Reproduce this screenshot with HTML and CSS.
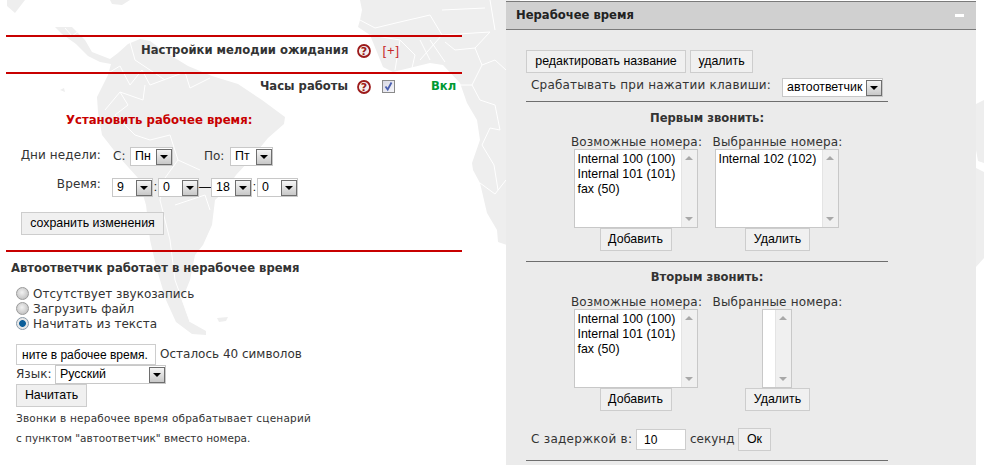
FILE: index.html
```html
<!DOCTYPE html>
<html lang="ru">
<head>
<meta charset="utf-8">
<title>Нерабочее время</title>
<link rel="stylesheet" href="styles.css">
</head>
<body>
<svg class="map" width="984" height="465" viewBox="0 0 984 465" aria-hidden="true">
  <g class="land">
    <path d="M7 0L25 0L15 13L7 6Z"/>
    <path d="M110 0L130 0L122 5L112 4Z"/>
    <path d="M55 27L72 27L85 40L92 52L110 59L118 53L128 44L140 39L150 41L165 52L188 66L212 76L238 84L262 100L285 117L284 124L268 138L250 160L236 175L226 190L215 200L212 225L203 245L195 255L190 280L182 300L190 322L206 331L206 335L192 334L176 322L166 300L157 270L150 240L146 205L138 178L120 158L102 135L98 112L97 97L108 75L111 64L100 62L88 56L76 44L62 34Z"/>
    <path d="M217 318L228 317L226 321L219 322Z"/>
    <path d="M60 90L64 88L65 92Z"/>
    <path d="M360 0L520 0L520 250L507 245L498 242L497 230L487 213L480 183L473 170L472 163L480 140L477 120L467 103L460 83L443 65L430 63L393 72L383 67L370 35L358 27L360 20L362 10Z"/>
    <path d="M976 104L984 100L984 163L978 161L976 150Z"/>
    <path d="M976 168L984 172L984 258L976 267Z"/>
  </g>
  <g class="borders">
    <path d="M65 28L72 36L80 30M98 62L110 72L120 66L130 85L142 70L150 85L185 72L190 88L210 78M130 42L135 60L165 80M145 85L143 100L120 92L105 110M120 92L128 105L115 115L135 135L150 140L170 135L178 160L200 170M178 160L165 178L160 200L170 240L175 280L190 322M175 205L205 195L210 210"/>
    <path d="M360 20L375 28L400 22L430 15L442 35L420 60M442 35L490 32M442 10L485 8M370 35L400 40L395 70M400 40L415 55L412 68M420 40L430 60M430 40L445 62M445 42L455 50L475 48L482 65L472 85L480 100L495 105L500 130M472 85L460 85M475 48L490 32M495 30L490 0M482 65L495 60L506 70M500 130L490 128L482 145L494 165L498 190M480 183L495 194L506 180"/>
  </g>
</svg>

<main class="page">
  <section class="left">
    <div class="band band-melody">
      <h3 class="row-title">Настройки мелодии ожидания</h3>
      <svg class="help" viewBox="0 0 14 14" width="14" height="14" aria-hidden="true"><circle class="help-ring" cx="7" cy="7" r="6"/><text class="help-mark" x="7" y="11" text-anchor="middle">?</text></svg>
      <span class="plus">[+]</span>
    </div>

    <div class="band band-hours">
      <div class="hours-head">
        <h3 class="row-title">Часы работы</h3>
        <svg class="help" viewBox="0 0 14 14" width="14" height="14" aria-hidden="true"><circle class="help-ring" cx="7" cy="7" r="6"/><text class="help-mark" x="7" y="11" text-anchor="middle">?</text></svg>
        <span class="check"><svg viewBox="0 0 11 11" width="11" height="11" aria-hidden="true"><path class="tick" d="M2.5 5.5L4.7 8.5L8.5 1.5"/></svg></span>
        <span class="on">Вкл</span>
      </div>
      <h4 class="set-title">Установить рабочее время:</h4>
      <div class="form-row days">
        <span class="form-label">Дни недели:</span>
        <span class="lbl-from">С:</span>
        <span class="sel w-day"><span class="sel-val">Пн</span><span class="arr"></span></span>
        <span class="lbl-to">По:</span>
        <span class="sel w-day"><span class="sel-val">Пт</span><span class="arr"></span></span>
      </div>
      <div class="form-row times">
        <span class="form-label">Время:</span>
        <span class="time-group">
          <span class="sel w-time"><span class="sel-val">9</span><span class="arr"></span></span>
          <span class="sep">:</span>
          <span class="sel w-time"><span class="sel-val">0</span><span class="arr"></span></span>
          <span class="dash">—</span>
          <span class="sel w-time"><span class="sel-val">18</span><span class="arr"></span></span>
          <span class="sep">:</span>
          <span class="sel w-time"><span class="sel-val">0</span><span class="arr"></span></span>
        </span>
      </div>
      <button class="btn save" type="button">сохранить изменения</button>
    </div>

    <div class="band band-auto">
      <h3 class="auto-title">Автоответчик работает в нерабочее время</h3>
      <div class="radios">
        <label class="radio-row"><span class="radio"></span>Отсутствует звукозапись</label>
        <label class="radio-row"><span class="radio"></span>Загрузить файл</label>
        <label class="radio-row"><span class="radio radio-on"></span>Начитать из текста</label>
      </div>
      <div class="tts-row">
        <input class="field tts" type="text" value="ните в рабочее время." readonly>
        <span class="remain">Осталось 40 символов</span>
      </div>
      <div class="lang-row">
        <span class="lang-label">Язык:</span>
        <span class="sel w-lang"><span class="sel-val">Русский</span><span class="arr"></span></span>
      </div>
      <button class="btn read" type="button">Начитать</button>
      <p class="note note-first">Звонки в нерабочее время обрабатывает сценарий</p>
      <p class="note">с пунктом "автоответчик" вместо номера.</p>
    </div>
  </section>

  <section class="panel">
    <header class="panel-head">
      <h2 class="panel-title">Нерабочее время</h2>
      <span class="collapse"></span>
    </header>
    <div class="panel-body">
      <div class="top-btns">
        <button class="btn rename" type="button">редактировать название</button>
        <button class="btn del" type="button">удалить</button>
      </div>
      <div class="key-row">
        <span class="key-label">Срабатывать при нажатии клавиши:</span>
        <span class="sel w-key"><span class="sel-val">автоответчик</span><span class="arr"></span></span>
      </div>

      <div class="ring first">
        <h4 class="ring-title">Первым звонить:</h4>
        <div class="pickers">
          <div class="picker">
            <span class="pick-label">Возможные номера:</span>
            <div class="listbox w-list">
              <div class="opts"><div>Internal 100 (100)</div><div>Internal 101 (101)</div><div>fax (50)</div></div>
              <div class="sb"><span class="up"></span><span class="down"></span></div>
            </div>
            <button class="btn add" type="button">Добавить</button>
          </div>
          <div class="picker">
            <span class="pick-label">Выбранные номера:</span>
            <div class="listbox w-list">
              <div class="opts"><div>Internal 102 (102)</div></div>
              <div class="sb"><span class="up"></span><span class="down"></span></div>
            </div>
            <button class="btn rem" type="button">Удалить</button>
          </div>
        </div>
      </div>

      <div class="ring second">
        <h4 class="ring-title">Вторым звонить:</h4>
        <div class="pickers">
          <div class="picker">
            <span class="pick-label">Возможные номера:</span>
            <div class="listbox w-list">
              <div class="opts"><div>Internal 100 (100)</div><div>Internal 101 (101)</div><div>fax (50)</div></div>
              <div class="sb"><span class="up"></span><span class="down"></span></div>
            </div>
            <button class="btn add" type="button">Добавить</button>
          </div>
          <div class="picker">
            <span class="pick-label">Выбранные номера:</span>
            <div class="listbox w-empty">
              <div class="opts"></div>
              <div class="sb"><span class="up"></span><span class="down"></span></div>
            </div>
            <button class="btn rem" type="button">Удалить</button>
          </div>
        </div>
      </div>

      <div class="delay-row">
        <span class="delay-label">С задержкой в:</span>
        <input class="field delay" type="text" value="10" readonly>
        <span class="delay-unit">секунд</span>
        <button class="btn ok" type="button">Ок</button>
      </div>
      <div class="end-rule"></div>
    </div>
  </section>
</main>
</body>
</html>
```
FILE: styles.css
```css
* { box-sizing: border-box; }
html, body { margin: 0; padding: 0; overflow: hidden; background: #fff; }
body { width: 984px; height: 465px; position: relative; font: 12px/15px "DejaVu Sans", Verdana, sans-serif; color: #333; }
h2, h3, h4, p { margin: 0; }

.map { position: absolute; left: 0; top: 0; }
.land path { fill: #eeeeee; }
.borders path { fill: none; stroke: #fff; stroke-width: 1; }

.page { position: relative; display: flex; height: 465px; align-items: flex-start; }

/* Left column */
.left { width: 456px; margin-left: 6px; padding-top: 35px; flex: none; }
.band { border-top: 2px solid #c80000; }
.band-melody { height: 37px; display: flex; align-items: center; padding: 0 0 8px 135px; }
.row-title { font-size: 11.6px; line-height: 15px; font-weight: bold; color: #333; }
.help { flex: none; display: block; margin-left: 9px; }
.help-ring { fill: #f4eeee; stroke: #9c1a1a; stroke-width: 1.8; }
.help-mark { font: bold 11px "DejaVu Sans", sans-serif; fill: #9c1a1a; }
.plus { margin-left: 11px; color: #c62828; font: 13px/15px "Liberation Sans", Arial, sans-serif; letter-spacing: 1px; }

.band-hours { height: 178px; }
.hours-head { height: 25px; display: flex; align-items: center; padding-left: 254px; }
.check { width: 13px; height: 13px; margin: -1px 0 0 11px; border: 1px solid #8a8a8a; background: linear-gradient(135deg, #d8d8e4, #f6f6fa); display: flex; align-items: center; justify-content: center; }
.tick { fill: none; stroke: #4a5fb0; stroke-width: 1.8; }
.on { margin-left: 36px; color: #009933; font-size: 11.6px; font-weight: bold; }
.set-title { margin: 13px 0 0 60px; color: #c80000; font-size: 11.7px; line-height: 16px; font-weight: bold; }

.form-row { display: flex; align-items: flex-start; }
.form-label { width: 95px; text-align: right; flex: none; letter-spacing: .1px; }
.days { margin-top: 19px; }
.days .form-label { padding-top: 1px; }
.lbl-from { margin: 2px 0 0 12px; width: 17px; }
.lbl-to { margin: 2px 0 0 31px; width: 26px; }
.times { margin-top: 12px; }
.time-group { display: flex; align-items: center; margin-left: 11px; }
.times .form-label { margin-top: -1px; }
.sep { width: 5px; text-align: center; font-family: "Liberation Sans", Arial, sans-serif; color: #111; }
.dash { width: 12px; text-align: center; font-family: "Liberation Sans", Arial, sans-serif; color: #111; }

.sel { display: inline-flex; align-items: center; height: 19px; border: 1px solid #c8c8c8; background: #fff; font: 12.4px/15px "Liberation Sans", Arial, sans-serif; color: #000; flex: none; }
.sel-val { flex: 1; padding-left: 4px; white-space: nowrap; }
.arr { width: 16px; height: 16px; flex: none; border: 1px solid #6e6e6e; background: linear-gradient(#f6f6f6, #c8c8c8); display: flex; align-items: center; justify-content: center; }
.arr::before { content: ""; border: 4px solid transparent; border-top-color: #000; border-bottom-width: 0; margin-top: 1px; }
.w-day { width: 43px; }
.w-time { width: 41px; }
.w-lang { width: 111px; }
.w-key { width: 101px; }

.btn { display: block; height: 23px; padding: 0; border: 1px solid #cdcdcd; background: #f0f0f0; color: #000; font: 12.4px/15px "Liberation Sans", Arial, sans-serif; text-align: center; }
.save { width: 143px; margin: 15px 0 0 15px; }

.auto-title { margin: 9px 0 0 5px; font-size: 11.6px; line-height: 15px; font-weight: bold; }
.radios { margin: 11px 0 0 10px; }
.radio-row { display: flex; align-items: center; height: 15px; }
.radio { width: 13px; height: 13px; margin: -3px 4px 0 0; border-radius: 50%; border: 1px solid #9a9a9a; background: radial-gradient(circle at 45% 40%, #f2f2f2, #c4c4c4 75%); flex: none; }
.radio-on { border-color: #8a9aa8; background: radial-gradient(circle, #0d5f9a 0 3px, #e8e8e8 3.8px); }

.tts-row { display: flex; align-items: center; margin: 12px 0 0 10px; height: 21px; }
.field { display: block; height: 21px; padding: 0 5px; border: 1px solid #cdcdcd; background: #fff; color: #000; font: 12px/15px "Liberation Sans", Arial, sans-serif; outline: 0; }
.tts { width: 140px; }
.remain { margin-left: 4px; }
.lang-row { display: flex; align-items: center; margin-left: 10px; }
.lang-label { width: 39px; }
.read { width: 71px; margin-left: 10px; }
.note { margin-left: 10px; font-size: 10.5px; line-height: 20px; }
.note-first { margin-top: 1px; letter-spacing: .2px; }

/* Right panel */
.panel { width: 470px; height: 465px; margin-left: 44px; flex: none; background: #ebebeb; margin-top: 1px; }
.panel-head { height: 29px; display: flex; align-items: center; justify-content: space-between; padding: 0 12px 0 10px; background: #d0d0d0; border-top: 1px solid #7a7a7a; border-bottom: 1px solid #7a7a7a; }
.panel-title { font-size: 11.6px; line-height: 15px; font-weight: bold; color: #222; }
.collapse { width: 9px; height: 3px; background: #fff; }
.panel-body { width: 382px; padding: 20px 0 0 20px; }
.top-btns { display: flex; gap: 4px; }
.rename { width: 160px; }
.del { width: 63px; }
.key-row { display: flex; align-items: flex-start; height: 29px; padding: 5px 0 0 5px; border-bottom: 1px solid #6e6e6e; }
.key-label { width: 251px; flex: none; letter-spacing: .2px; white-space: nowrap; }

.ring { text-align: center; }
.first { height: 160px; border-bottom: 1px solid #6e6e6e; }
.ring-title { font-size: 11.6px; line-height: 15px; font-weight: bold; padding-top: 9px; box-sizing: content-box; }
.second .ring-title { padding-top: 8px; }
.pickers { display: flex; justify-content: center; gap: 10px; margin-top: 9px; }
.second .pickers { margin-top: 10px; }
.picker { width: 131px; display: flex; flex-direction: column; align-items: center; }
.pick-label { height: 14px; line-height: 15px; white-space: nowrap; letter-spacing: .17px; }
.listbox { display: flex; height: 79px; margin-left: -2px; border: 1px solid #c8c8c8; background: #fff; font: 12.4px/15px "Liberation Sans", Arial, sans-serif; color: #000; text-align: left; }
.w-list { width: 124px; }
.w-empty { width: 30px; }
.opts { flex: 1; padding: 2px 3px 0; white-space: nowrap; overflow: hidden; }
.sb { width: 16px; flex: none; background: #f0f0f0; border-left: 1px solid #e4e4e4; display: flex; flex-direction: column; justify-content: space-between; align-items: center; padding: 6px 0; }
.up { border: 4px solid transparent; border-bottom-color: #a8a8a8; border-top-width: 0; }
.down { border: 4px solid transparent; border-top-color: #a8a8a8; border-bottom-width: 0; }
.add { width: 72px; margin-left: -2px; }
.rem { width: 65px; }

.delay-row { display: flex; align-items: center; height: 23px; margin-top: 17px; padding-left: 5px; }
.delay-label { width: 105px; flex: none; letter-spacing: .28px; white-space: nowrap; }
.delay { width: 50px; padding-left: 7px; }
.delay-unit { margin-left: 4px; width: 48px; flex: none; }
.ok { width: 33px; }
.end-rule { height: 1px; margin-top: 9px; background: #6e6e6e; }
```
